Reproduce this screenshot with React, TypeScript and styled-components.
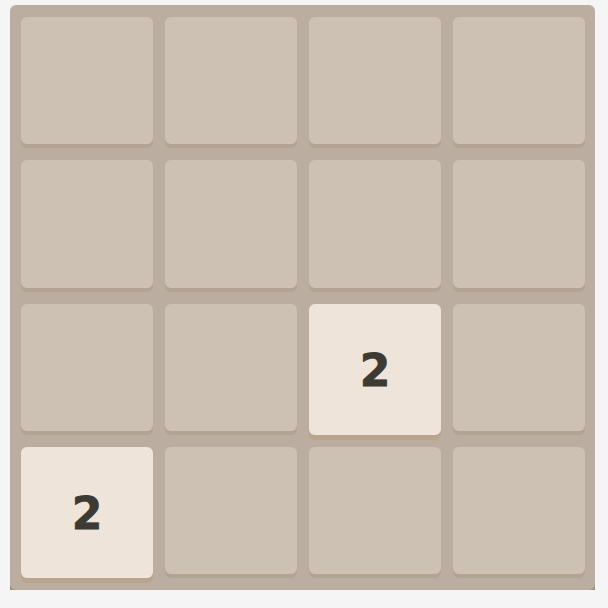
import React from 'react';
import styled, { createGlobalStyle } from 'styled-components';

const GlobalStyle = createGlobalStyle`
  html, body {
    margin: 0;
    padding: 0;
    background: #f5f5f5;
    font-family: "DejaVu Sans", "Liberation Sans", sans-serif;
  }
`;

const Board = styled.div`
  margin: 5px 0 0 10px;
  width: 585px;
  height: 585px;
  box-sizing: border-box;
  padding: 12px 10px 12px 11px;
  background: #bbada0;
  border-radius: 6px;
  box-shadow: 0 9px 0 #9d8b7c;
  display: grid;
  grid-template-columns: repeat(4, 1fr);
  grid-template-rows: repeat(4, 1fr);
  gap: 12px;
`;

const Cell = styled.div<{ $filled: boolean }>`
  align-self: start;
  height: ${(p) => (p.$filled ? '100%' : 'calc(100% - 4px)')};
  box-sizing: border-box;
  padding-top: 3px;
  border-radius: 6px;
  display: flex;
  align-items: center;
  justify-content: center;
  background: ${(p) => (p.$filled ? '#eee4da' : '#cdc1b4')};
  box-shadow: 0 ${(p) => (p.$filled ? '5px' : '4px')} 0
    ${(p) => (p.$filled ? '#b9a58f' : '#b3a392')};
  color: #3c3a32;
  font-family: "DejaVu Sans", "Liberation Sans", sans-serif;
  font-weight: bold;
  font-size: 44px;
  line-height: 1;
  -webkit-text-stroke: 0.8px #3c3a32;
`;

// 0 means an empty slot
const grid: number[][] = [
  [0, 0, 0, 0],
  [0, 0, 0, 0],
  [0, 0, 2, 0],
  [2, 0, 0, 0],
];

export default function App() {
  return (
    <>
      <GlobalStyle />
      <Board>
        {grid.flat().map((value, i) => (
          <Cell key={i} $filled={value > 0}>
            {value > 0 ? value : null}
          </Cell>
        ))}
      </Board>
    </>
  );
}
